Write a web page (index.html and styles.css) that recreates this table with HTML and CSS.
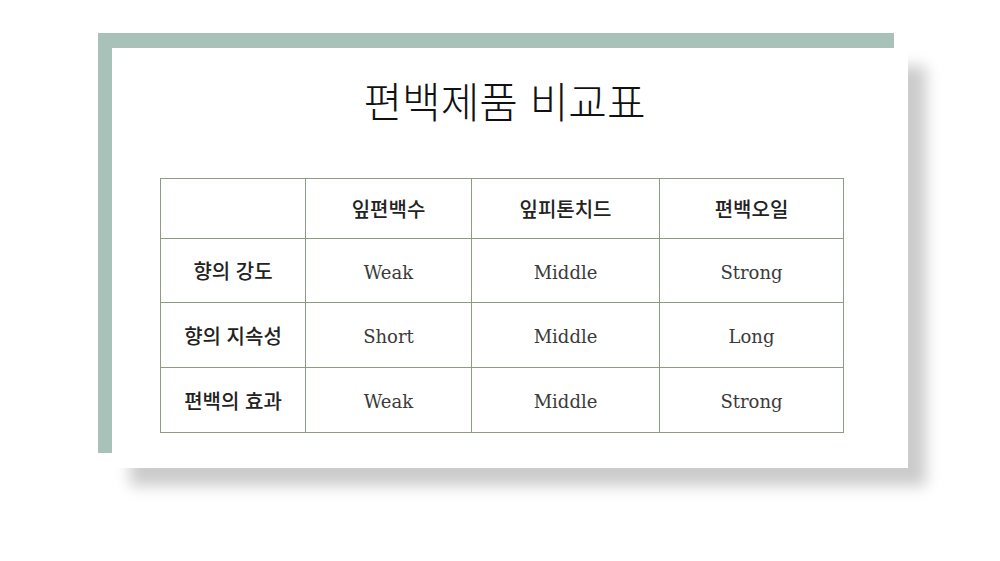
FILE: index.html
```html
<!DOCTYPE html>
<html lang="ko">
<head>
<meta charset="utf-8">
<link rel="stylesheet" href="styles.css">
</head>
<body>
<div class="card">
  <h1 class="title">편백제품 비교표</h1>
  <table class="compare">
    <colgroup>
      <col class="c1"><col class="c2"><col class="c3"><col class="c4">
    </colgroup>
    <tr class="head">
      <th></th><th>잎편백수</th><th>잎피톤치드</th><th>편백오일</th>
    </tr>
    <tr class="first">
      <th>향의 강도</th><td>Weak</td><td>Middle</td><td>Strong</td>
    </tr>
    <tr>
      <th>향의 지속성</th><td>Short</td><td>Middle</td><td>Long</td>
    </tr>
    <tr>
      <th>편백의 효과</th><td>Weak</td><td>Middle</td><td>Strong</td>
    </tr>
  </table>
</div>
</body>
</html>
```
FILE: styles.css
```css
html, body {
  margin: 0;
  padding: 0;
  background: #ffffff;
}
body {
  width: 1000px;
  height: 561px;
  overflow: hidden;
  padding-top: 48px;
  box-sizing: border-box;
}
.card {
  margin-left: 112px;
  width: 796px;
  height: 420px;
  background: #ffffff;
  box-sizing: border-box;
  padding: 0 65px 0 48px;
  box-shadow: -14px -15px 0 0 #a8c2b9, 18px 18px 14px 0 #cccccc;
}
.title {
  margin: 0;
  padding-top: 26px;
  height: 100px;
  box-sizing: border-box;
  text-align: center;
  font-family: "Noto Sans CJK KR", sans-serif;
  font-weight: 300;
  font-size: 42px;
  line-height: 52px;
  color: #111;
  padding-left: 6px;
}
.compare {
  margin-top: 30px;
  border-collapse: collapse;
  width: 683px;
  table-layout: fixed;
}
.c1 { width: 145px; }
.c2 { width: 166px; }
.c3 { width: 188px; }
.c4 { width: 184px; }
.compare th, .compare td {
  border: 1px solid #8c9b85;
  text-align: center;
  padding: 0;
  height: 64px;
}
.compare td {
  padding-top: 3px;
  height: 61px;
}
.compare tr.head th {
  height: 59px;
}
.compare tr.first th {
  height: 63px;
}
.compare tr.first td {
  height: 60px;
}
.compare th {
  font-family: "Noto Sans CJK KR", sans-serif;
  font-weight: 500;
  font-size: 20px;
  color: #222;
}
.compare td {
  font-family: "DejaVu Serif", serif;
  font-size: 18px;
  color: #3a3a3a;
}
```
